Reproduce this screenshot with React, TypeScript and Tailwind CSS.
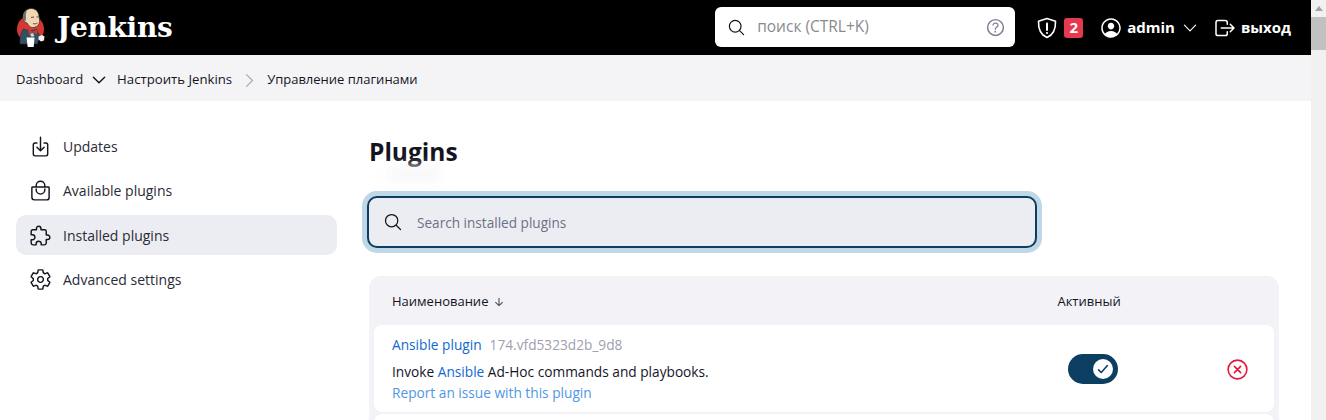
import {
  IoArrowDown,
  IoBagHandleOutline,
  IoCheckmark,
  IoChevronDown,
  IoChevronForward,
  IoCloseCircleOutline,
  IoDownloadOutline,
  IoExtensionPuzzleOutline,
  IoHelpCircleOutline,
  IoLogOutOutline,
  IoPersonCircleOutline,
  IoSearchOutline,
  IoSettingsOutline,
} from "react-icons/io5"

function Logo() {
  return (
    <svg width="30" height="40" viewBox="0 0 30 40" className="shrink-0">
      <circle cx="14.500" cy="21" r="13.500" fill="#d33833" />
      {/* body */}
      <path d="M4 36c-.5-6 .5-11 3.500-15l7 2 6-1.500 3 6.500-2 8z" fill="#335061" stroke="#1c2f3a" strokeWidth=".6" />
      {/* head */}
      <path d="M7 9c0-5 4-8.500 8-8.500 4.500 0 7.500 3 8 7.500l.5 4c.5 2-.5 5-3 6.500-2.500 1.500-5.500 1.500-7.500-.5l-2-3C8 14.500 7 12 7 9z" fill="#f0d6b7" stroke="#3a2a20" strokeWidth=".7" />
      <path d="M7 9c0-3 1.500-5.500 4-7-1 2.500-1.500 5-1 8l-.5 3.500C8 12.500 7 11 7 9z" fill="#6d6b6d" />
      <path d="M15 9.500l3-.5M20.500 9l2-.2M17 15.500c1.500.7 3 .5 4.500-.5" stroke="#3a2a20" strokeWidth=".8" fill="none" />
      {/* bow tie */}
      <path d="M12 21.500l4.500 2 5-2-.5 4.500-4.500-1.500-3.500 2z" fill="#d33833" />
      {/* shirt details and apron */}
      <path d="M14 26l3-1 1.500 3-3 1z" fill="#c9d3db" />
      <path d="M10.500 29.500h8l-.8 9.500h-6z" fill="#fff" />
      {/* hand */}
      <path d="M22.500 28.500l3.500-1.500 2.500 1.500-.5 4-3 1-2.500-2z" fill="#eef0f2" />
    </svg>
  )
}

function ShieldAlert() {
  return (
    <svg width="24" height="24" viewBox="0 0 24 24" fill="none" stroke="#fff" strokeWidth="1.6" strokeLinejoin="round">
      <path d="M12 2.500l8.500 2.700c.3 8.500-2.500 13.800-8.500 16.300C6 19 3.200 13.700 3.500 5.200z" />
      <path d="M12 7.500v6.500" strokeLinecap="round" strokeWidth="2" />
      <circle cx="12" cy="17" r="1.100" fill="#fff" stroke="none" />
    </svg>
  )
}

const sideItems = [
  { label: "Updates", icon: IoDownloadOutline },
  { label: "Available plugins", icon: IoBagHandleOutline },
  { label: "Installed plugins", icon: IoExtensionPuzzleOutline, active: true },
  { label: "Advanced settings", icon: IoSettingsOutline },
]

export default function App() {
  return (
    <div className="flex h-[420px] overflow-hidden bg-white text-[14px] text-[#14141f] font-['Open_Sans','Noto_Sans',sans-serif]">
      <div className="flex-1 min-w-0">
        <header className="h-[55px] bg-black flex items-center text-white">
          <div className="flex items-center ml-[16px]">
            <Logo />
            <span className="ml-[11px] text-[28px] font-bold leading-none font-['DejaVu_Serif',serif] tracking-[-0.3px]">Jenkins</span>
          </div>
          <div className="ml-auto mb-[1px] w-[300px] h-[40px] bg-white rounded-[6px] flex items-center pl-[12px] pr-[8px] text-[#14141f]">
            <IoSearchOutline size={19} />
            <span className="ml-[11px] text-[#8a8a8e] text-[15.500px]">поиск (CTRL+K)</span>
            <IoHelpCircleOutline size={23} className="ml-auto text-[#7a7a94]" />
          </div>
          <div className="flex items-center ml-[20px]">
            <ShieldAlert />
            <span className="ml-[5px] w-[19px] h-[20px] bg-[#e6384f] rounded-[3px] text-[15px] font-bold flex items-center justify-center">2</span>
          </div>
          <div className="flex items-center ml-[16px]">
            <IoPersonCircleOutline size={24} />
            <span className="ml-[4px] font-bold text-[15px]">admin</span>
            <IoChevronDown size={20} className="ml-[5px] [&_path]:[stroke-width:28px]" />
          </div>
          <div className="flex items-center ml-[13px] mr-[20px]">
            <IoLogOutOutline size={24} />
            <span className="ml-[4px] font-bold text-[15px]">выход</span>
          </div>
        </header>

        <nav className="h-[46px] bg-[#f4f4f6] flex items-center pl-[16px] pt-[4px] text-[13px]">
          <span>Dashboard</span>
          <IoChevronDown size={20} className="ml-[6px] [&_path]:[stroke-width:36px]" />
          <span className="ml-[8px] text-[13.200px]">Настроить Jenkins</span>
          <IoChevronForward size={21} className="ml-[7px] text-[#a8a8b8] [&_path]:[stroke-width:30px]" />
          <span className="ml-[7px]">Управление плагинами</span>
        </nav>

        <div className="flex">
          <aside className="w-[321px] ml-[16px] pt-[25px] flex flex-col gap-[4.500px] shrink-0">
            {sideItems.map((item) => {
              const Icon = item.icon
              return (
                <div
                  key={item.label}
                  className={`h-[40px] flex items-center pl-[13px] rounded-[10px] ${item.active ? "bg-[#ecedf2]" : ""}`}
                >
                  <Icon size={23} />
                  <span className="ml-[11px] text-[14px] font-medium text-[#2b2b38]">{item.label}</span>
                </div>
              )
            })}
          </aside>

          <main className="ml-[32px] w-[910px] shrink-0 relative">
            <h1 className="mt-[33px] text-[24.500px] leading-[36px] font-bold">Plugins</h1>
            <div className="absolute left-[20px] top-[66px] w-[50px] h-[14px] bg-[#f7f7f9] blur-[6px]" />

            <div className="relative mt-[26px] -ml-[2px] w-[670px] h-[52px] bg-[#ecedf2] border-2 border-[#0b3e61] rounded-[10px] shadow-[0_0_0_5px_#c0d7e6] flex items-center pl-[14px]">
              <IoSearchOutline size={20} />
              <span className="ml-[14px] pt-[2px] text-[13.600px] font-medium text-[#6f6f88]">Search installed plugins</span>
            </div>

            <section className="mt-[28px] bg-[#f2f2f7] rounded-[12px] px-[5px]">
              <div className="h-[49px] flex items-center pt-[2px] text-[13px]">
                <span className="ml-[18px]">Наименование</span>
                <IoArrowDown size={12} className="ml-[5px] text-[#55556a]" />
                <span className="ml-[552px]">Активный</span>
              </div>

              <div className="h-[87px] bg-white rounded-[8px] flex items-start relative">
                <div className="ml-[18px] pt-[10px] text-[13.700px]">
                  <div className="leading-[20px]">
                    <span className="text-[#1168d0] font-medium">Ansible plugin</span>
                    <span className="ml-[8px] text-[#a0a0b0]">174.vfd5323d2b_9d8</span>
                  </div>
                  <div className="mt-[7px] leading-[20px]">
                    Invoke <span className="text-[#1168d0] font-medium">Ansible</span> Ad-Hoc commands and playbooks.
                  </div>
                  <div className="leading-[20px] mt-[1px] text-[#4f97e4]">Report an issue with this plugin</div>
                </div>
                <div className="ml-auto mt-[29px] mr-[156px] w-[50px] h-[30px] rounded-full bg-[#0b3e61] flex items-center justify-end pr-[5px]">
                  <div className="w-[20px] h-[20px] rounded-full bg-white flex items-center justify-center text-[#0b3e61]">
                    <IoCheckmark size={14} className="[&_path]:[stroke-width:56px]" />
                  </div>
                </div>
                <IoCloseCircleOutline size={25} className="absolute right-[24px] top-[31.500px] text-[#e6143c]" />
              </div>
              <div className="mt-[2px] h-[20px] bg-white rounded-t-[8px]" />
            </section>
          </main>
        </div>
      </div>

      <div className="w-[15px] shrink-0 bg-[#f1f1f1] flex flex-col items-center">
        <div className="h-[17px] flex items-center justify-center">
          <div className="w-0 h-0 border-x-[4px] border-x-transparent border-b-[5px] border-b-[#a3a3a3]" />
        </div>
        <div className="w-full h-[33px] bg-[#c1c1c1]" />
      </div>
    </div>
  )
}
